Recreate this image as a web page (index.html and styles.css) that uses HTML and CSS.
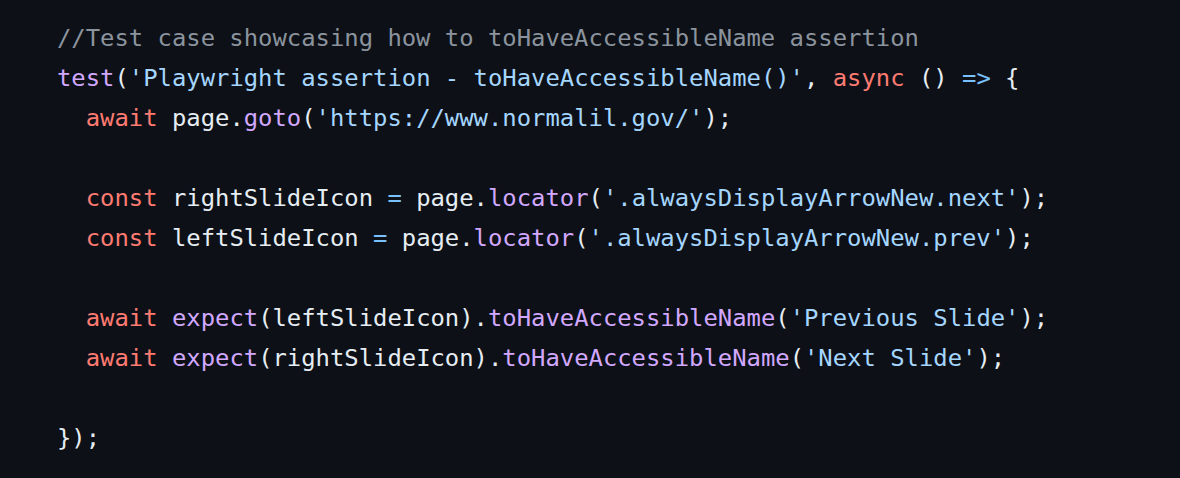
FILE: index.html
```html
<!DOCTYPE html>
<html lang="en">
<head>
<meta charset="utf-8">
<title>toHaveAccessibleName</title>
<link rel="stylesheet" href="styles.css">
</head>
<body>
<pre class="code"><code><span class="c">//Test case showcasing how to toHaveAccessibleName assertion</span>
<span class="f">test</span>(<span class="s">'Playwright assertion - toHaveAccessibleName()'</span>, <span class="k">async</span> () <span class="o">=&gt;</span> {
  <span class="k">await</span> page.<span class="f">goto</span>(<span class="s">'https://www.normalil.gov/'</span>);

  <span class="k">const</span> rightSlideIcon <span class="o">=</span> page.<span class="f">locator</span>(<span class="s">'.alwaysDisplayArrowNew.next'</span>);
  <span class="k">const</span> leftSlideIcon <span class="o">=</span> page.<span class="f">locator</span>(<span class="s">'.alwaysDisplayArrowNew.prev'</span>);

  <span class="k">await</span> <span class="f">expect</span>(leftSlideIcon).<span class="f">toHaveAccessibleName</span>(<span class="s">'Previous Slide'</span>);
  <span class="k">await</span> <span class="f">expect</span>(rightSlideIcon).<span class="f">toHaveAccessibleName</span>(<span class="s">'Next Slide'</span>);

});</code></pre>
</body>
</html>
```
FILE: styles.css
```css
html, body {
  margin: 0;
  padding: 0;
  background: #0d1117;
  height: 100%;
}
.code {
  margin: 0;
  padding: 18px 0 0 57px;
  font-family: "DejaVu Sans Mono", "Liberation Mono", monospace;
  font-size: 23.87px;
  line-height: 40px;
  color: #e6edf3;
  background: #0d1117;
  white-space: pre;
}
.c { color: #8b949e; }
.k { color: #ff7b72; }
.s { color: #a5d6ff; }
.f { color: #d2a8ff; }
.o { color: #79c0ff; }
```
